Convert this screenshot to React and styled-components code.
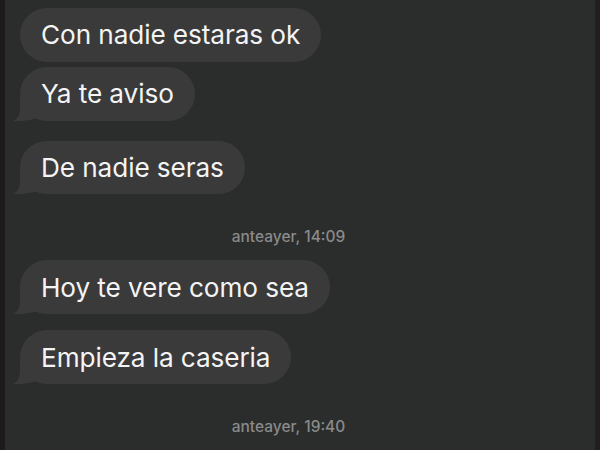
import React from "react";
import styled, { createGlobalStyle } from "styled-components";

const GlobalStyle = createGlobalStyle`
  html, body {
    margin: 0;
    padding: 0;
    background: #2b2d2c;
  }
  body {
    font-family: Inter, "Open Sans", sans-serif;
  }
`;

const messages = [
  { type: "msg", text: "Con nadie estaras ok", tail: false, gap: 5 },
  { type: "msg", text: "Ya te aviso", tail: true, gap: 20 },
  { type: "msg", text: "De nadie seras", tail: true, gap: 0 },
  { type: "stamp", text: "anteayer, 14:09" },
  { type: "msg", text: "Hoy te vere como sea", tail: true, gap: 16 },
  { type: "msg", text: "Empieza la caseria", tail: true, gap: 0 },
  { type: "stamp", text: "anteayer, 19:40" },
];

export default function App() {
  return (
    <Screen>
      <GlobalStyle />
      <Edge />
      <Thread>
        {messages.map((m, i) =>
          m.type === "stamp" ? (
            <Stamp key={i}>{m.text}</Stamp>
          ) : (
            <Bubble key={i} $gap={m.gap}>
              {m.text}
              {m.tail && (
                <Tail viewBox="0 0 24 24" width="24" height="24">
                  <path d="M7 0 H24 V21 C18 23 10 24.5 0 24 C5 22 7 17 7 10 Z" />
                </Tail>
              )}
            </Bubble>
          )
        )}
      </Thread>
      <Edge $right />
    </Screen>
  );
}

const Screen = styled.div`
  width: 600px;
  height: 450px;
  display: flex;
  overflow: hidden;
  background: #2b2d2c;
`;

const Edge = styled.div`
  width: 5px;
  flex-shrink: 0;
  background: ${(p) => (p.$right ? "#221e1f" : "#1d1a1b")};
`;

const Thread = styled.div`
  flex: 1;
  display: flex;
  flex-direction: column;
  align-items: flex-start;
  padding: 8px 0 0 15px;
`;

const Bubble = styled.div`
  position: relative;
  height: 56px;
  box-sizing: border-box;
  padding: 0 21px;
  display: flex;
  align-items: center;
  border-radius: 28px;
  background: #3a3a3b;
  color: #f4f4f4;
  font-size: 26.2px;
  letter-spacing: -0.1px;
  white-space: nowrap;
  margin-bottom: ${(p) => p.$gap}px;
`;

const Tail = styled.svg`
  position: absolute;
  left: -7px;
  bottom: 0;
  fill: #3a3a3b;
`;

const Stamp = styled.div`
  align-self: stretch;
  text-align: center;
  padding-right: 38px;
  margin: 33px 0 13px;
  color: #8a8b8b;
  font-size: 15.5px;
  font-weight: 500;
  line-height: 20px;
`;
